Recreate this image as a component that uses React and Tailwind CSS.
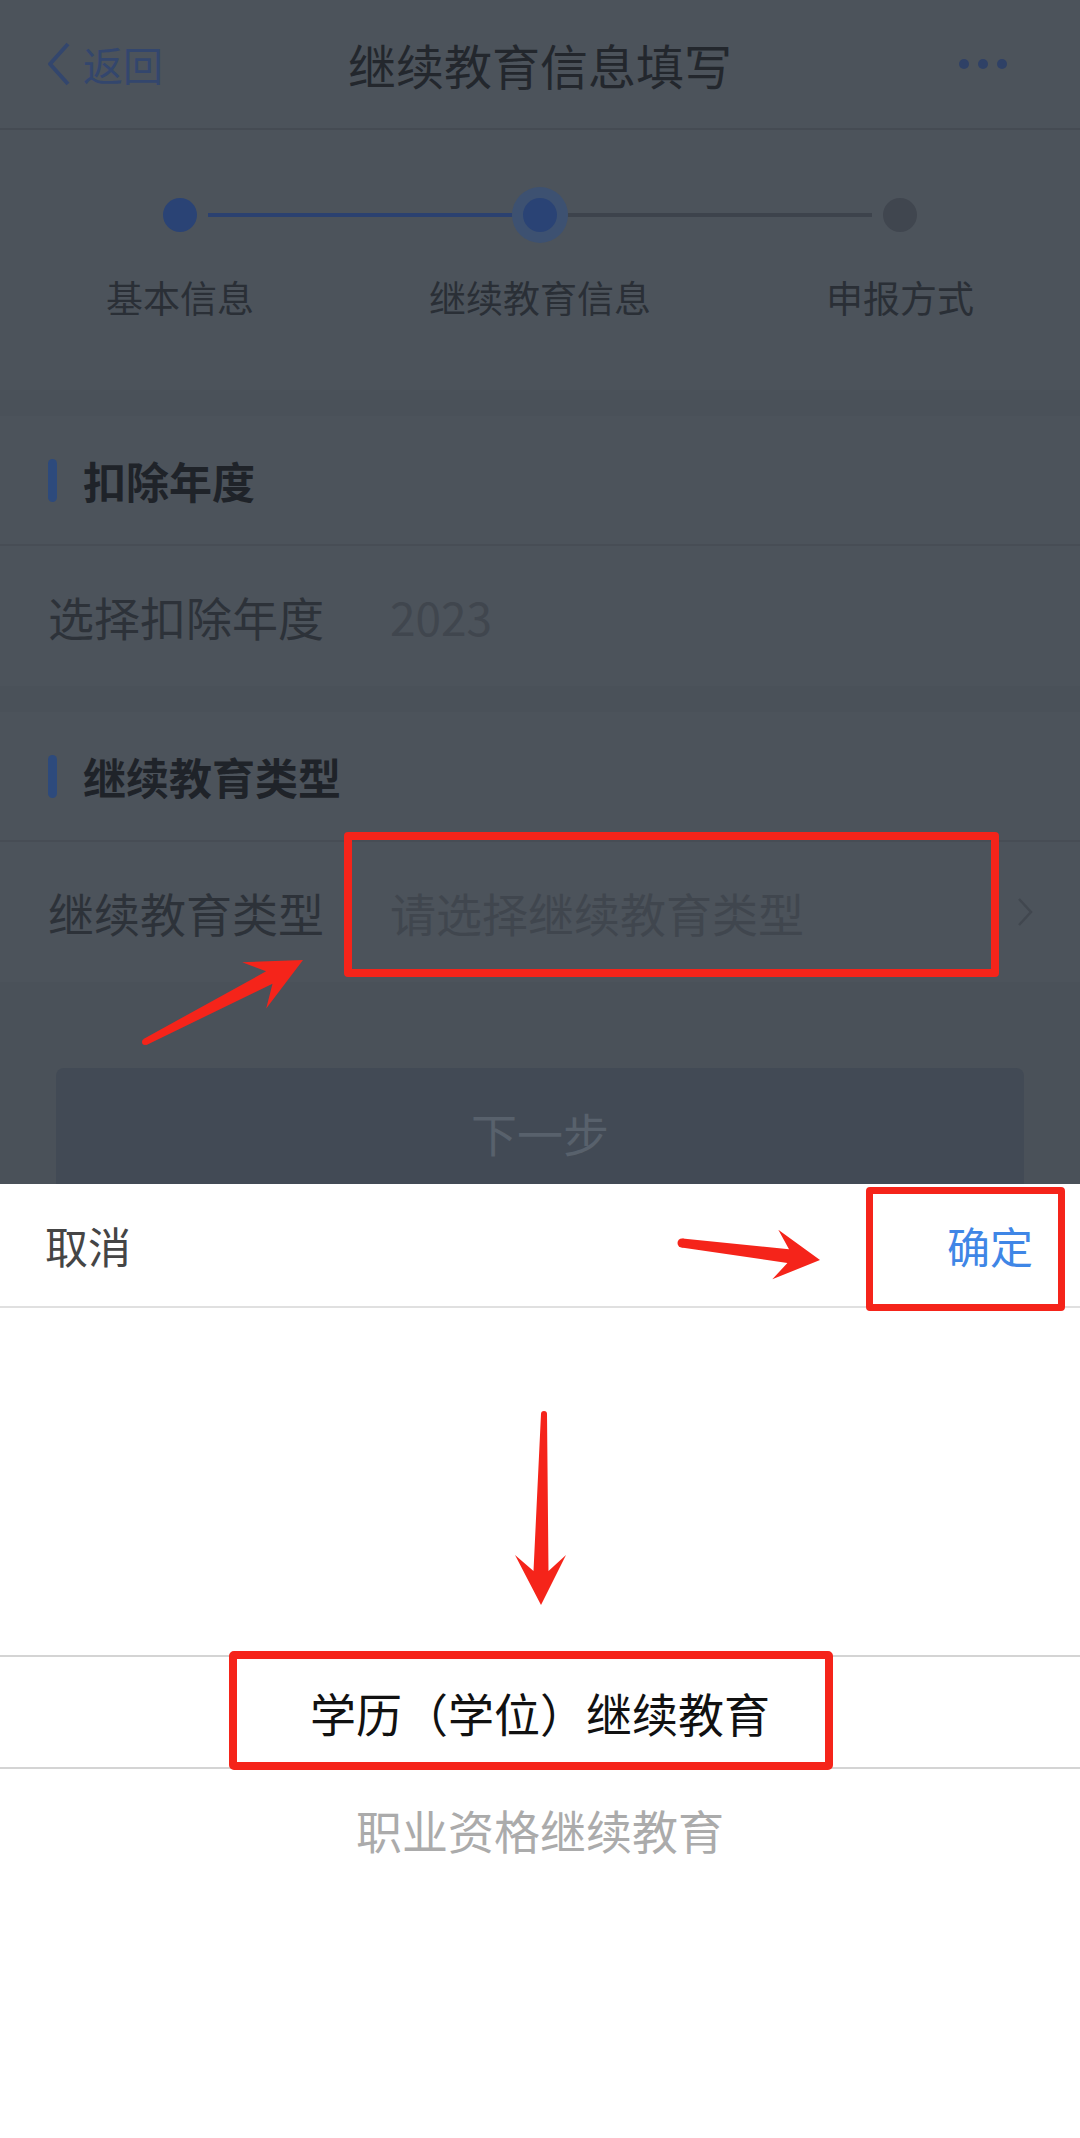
import React from "react";

const font = { fontFamily: '"Noto Sans CJK SC", "Noto Sans", sans-serif' };

const steps = [
  { label: "基本信息", left: "", right: "bg-[#2b4170]", state: "done" },
  { label: "继续教育信息", left: "bg-[#2b4170]", right: "bg-[#3d434c]", state: "active" },
  { label: "申报方式", left: "bg-[#3d434c]", right: "", state: "todo" },
];

const Stepper = () => (
  <div className="grid grid-cols-3 pt-[57px] pb-[67px] bg-[#4c535b]">
    {steps.map((s) => (
      <div key={s.label} className="flex flex-col items-center">
        <div className="flex items-center w-full h-[56px]">
          <div className={`flex-1 h-[4px] ${s.left}`} />
          <div
            className={`w-[56px] h-[56px] rounded-full flex items-center justify-center ${
              s.state === "active" ? "bg-[#3d5171]" : ""
            }`}
          >
            <div
              className={`w-[34px] h-[34px] rounded-full ${
                s.state === "todo" ? "bg-[#40464f]" : "bg-[#2a4375]"
              }`}
            />
          </div>
          <div className={`flex-1 h-[4px] ${s.right}`} />
        </div>
        <div className="mt-[30px] h-[50px] flex items-center text-[37px] text-[#2a2f36]">
          {s.label}
        </div>
      </div>
    ))}
  </div>
);

const SectionTitle = ({ children }) => (
  <div className="h-[130px] flex items-center pl-[48px] border-b-2 border-[#474d55] bg-[#4c535b]">
    <div className="w-[9px] h-[43px] rounded-full bg-[#2d4a7c]" />
    <div className="ml-[26px] text-[43px] font-bold text-[#1f2329]">{children}</div>
  </div>
);

const Row = ({ label, value, chevron }) => (
  <div className="h-[140px] flex items-center pl-[48px] pr-[46px] bg-[#4c535b]">
    <div className="w-[342px] text-[46px] text-[#2d3239]">{label}</div>
    <div className="flex-1 text-[46px] text-[#40464e]">{value}</div>
    {chevron && (
      <svg width="18" height="30" viewBox="0 0 18 30" fill="none">
        <path d="M3 2 L15 15 L3 28" stroke="#41474f" strokeWidth="2.5" />
      </svg>
    )}
  </div>
);

const Arrows = () => (
  <svg
    className="absolute inset-0 pointer-events-none"
    width="1080"
    height="2138"
    viewBox="0 0 1080 2138"
  >
    <g fill="#f5241a">
      <polygon points="146.5,1045 272.5,983.7 266.2,1008.5 303,960 242.2,962.3 266.1,971.3 143.5,1039" />
      <circle cx="145" cy="1042" r="3" />
      <polygon points="681.5,1247.5 787.4,1263 772.3,1279.3 820,1260 778.3,1229.7 789,1249.2 682.5,1238.5" />
      <circle cx="682" cy="1243" r="4.5" />
      <polygon points="541,1414 547,1414 548.5,1571 566,1555 541,1605 515,1555 533.5,1571" />
      <circle cx="544" cy="1414" r="3" />
    </g>
  </svg>
);

export default function App() {
  return (
    <div className="relative w-[1080px] h-[2138px] overflow-hidden flex flex-col bg-white" style={font}>
      {/* dimmed page behind the sheet */}
      <div className="h-[1184px] shrink-0 overflow-hidden bg-[#4a5159]">
        <div className="h-[130px] flex items-center px-[46px] border-b-2 border-[#454b53] bg-[#4c535b]">
          <div className="w-[300px] flex items-center">
            <svg width="26" height="44" viewBox="0 0 26 44" fill="none">
              <path d="M22 2 L4 22 L22 42" stroke="#33466d" strokeWidth="4" strokeLinejoin="round" />
            </svg>
            <span className="ml-[11px] text-[40px] text-[#33466d]">返回</span>
          </div>
          <div className="flex-1 text-center text-[48px] text-[#23272d]">继续教育信息填写</div>
          <div className="w-[300px] flex justify-end gap-[9px] pr-[27px]">
            <span className="w-[10px] h-[10px] rounded-full bg-[#2f4166]" />
            <span className="w-[10px] h-[10px] rounded-full bg-[#2f4166]" />
            <span className="w-[10px] h-[10px] rounded-full bg-[#2f4166]" />
          </div>
        </div>

        <Stepper />

        <div className="h-[26px]" />
        <SectionTitle>扣除年度</SectionTitle>
        <Row label="选择扣除年度" value="2023" />

        <div className="h-[26px]" />
        <SectionTitle>继续教育类型</SectionTitle>
        <Row label="继续教育类型" value="请选择继续教育类型" chevron />

        <div className="mt-[86px] mx-[56px] h-[128px] rounded-[8px] bg-[#424a55] flex items-center justify-center text-[46px] text-[#58616c]">
          下一步
        </div>
      </div>

      {/* bottom picker sheet */}
      <div className="flex-1 bg-white flex flex-col">
        <div className="h-[124px] flex items-center justify-between pl-[45px] pr-[47px] border-b-2 border-[#e0e0e0]">
          <span className="text-[43px] text-[#454545]">取消</span>
          <span className="text-[43px] text-[#3f86e6]">确定</span>
        </div>
        <div className="h-[347px]" />
        <div className="h-[114px] border-y-2 border-[#d4d4d4] flex items-center justify-center text-[46px] text-[#111111]">
          学历（学位）继续教育
        </div>
        <div className="h-[120px] flex items-center justify-center text-[46px] text-[#ababab]">
          职业资格继续教育
        </div>
      </div>

      {/* annotation marks */}
      <div className="absolute left-[344px] top-[832px] w-[655px] h-[145px] border-[8px] border-[#f5241a] rounded-[4px]" />
      <div className="absolute left-[866px] top-[1187px] w-[199px] h-[124px] border-[7px] border-[#f5241a] rounded-[4px]" />
      <div className="absolute left-[229px] top-[1651px] w-[604px] h-[119px] border-[8px] border-[#f5241a] rounded-[5px]" />
      <Arrows />
    </div>
  );
}
